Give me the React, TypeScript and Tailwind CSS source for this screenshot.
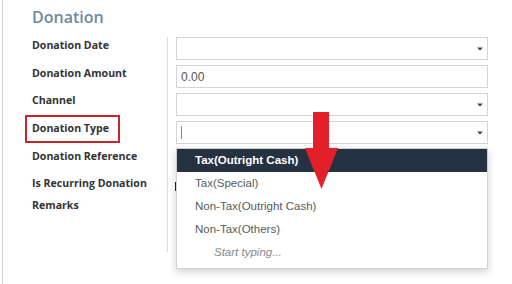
import { ReactNode } from 'react';

const labels = [
  'Donation Date',
  'Donation Amount',
  'Channel',
  'Donation Type',
  'Donation Reference',
  'Is Recurring Donation',
];

const options = ['Tax(Special)', 'Non-Tax(Outright Cash)', 'Non-Tax(Others)'];

function Caret() {
  return (
    <svg width="6" height="4" viewBox="0 0 6 4" className="absolute right-[4px] top-1/2 -translate-y-1/2">
      <path d="M0 0.5 L6 0.5 L3 3.5 Z" fill="#444" />
    </svg>
  );
}

function Field({ children, select }: { children?: ReactNode; select?: boolean }) {
  return (
    <div className="relative h-[23px] w-[312px] border border-[#d4d4d4] bg-white flex items-center pl-[4px] text-[12px] text-[#555]">
      {children}
      {select && <Caret />}
    </div>
  );
}

export default function App() {
  return (
    <div className="w-[512px] h-[284px] bg-white overflow-hidden relative" style={{ fontFamily: '"Open Sans", sans-serif' }}>
      <div className="ml-[2px] h-full border-l border-[#d0d0d0] pl-[22px]">
        {/* Heading */}
        <h2 className="pt-[5px] h-[32px] pl-[7px] text-[16px] leading-[24px] font-semibold text-[#6c89a3]">Donation</h2>

        <div className="flex items-start">
          {/* Labels */}
          <div className="w-[142px] flex flex-col">
            {labels.map((l) => (
              <div
                key={l}
                className={`h-[27.7px] w-[95px] flex items-center whitespace-nowrap pl-[5px] border-2 text-[10.6px] font-bold text-[#333] ${
                  l === 'Donation Type' ? 'border-[#c6262f]' : 'border-transparent'
                }`}
              >
                {l}
              </div>
            ))}
            <div className="h-[16px] flex items-center pl-[7px] text-[10.6px] font-bold text-[#333]">Remarks</div>
          </div>

          {/* Inputs */}
          <div className="mt-[5px] h-[215px] border-l border-[#dcdcdc] pl-[8px] flex flex-col gap-[5px]" style={{ fontFamily: '"Liberation Sans", Arial, sans-serif' }}>
            <Field select />
            <Field>0.00</Field>
            <Field select />
            <div className="relative">
              <Field select>
                <span className="block w-px h-[13px] bg-[#888]" />
              </Field>
              {/* Open dropdown */}
              <div className="absolute left-0 top-[27px] w-[312px] h-[121px] border border-[#d0d0d0] bg-white shadow-[0_3px_8px_rgba(0,0,0,0.18)] z-10 text-[11.5px]">
                <div className="h-[23px] bg-[#243241] text-white font-bold flex items-center pl-[18px]">Tax(Outright Cash)</div>
                {options.map((o) => (
                  <div key={o} className="h-[23px] flex items-center pl-[18px] text-[#5a5a5a]">
                    {o}
                  </div>
                ))}
                <div className="h-[24px] flex items-center pl-[37px] italic text-[#888]">Start typing...</div>
              </div>
            </div>
            <div className="mt-[33px] -ml-[1px] w-[2px] h-[9px] bg-[#222]" />
          </div>
        </div>
      </div>

      {/* Red annotation arrow */}
      <svg width="34" height="78" viewBox="0 0 34 78" className="absolute left-[305px] top-[112px] z-20">
        <rect x="8" y="0" width="16" height="38" fill="#e3202a" />
        <polygon points="0,36 33,36 16.5,77" fill="#e3202a" />
      </svg>
    </div>
  );
}
